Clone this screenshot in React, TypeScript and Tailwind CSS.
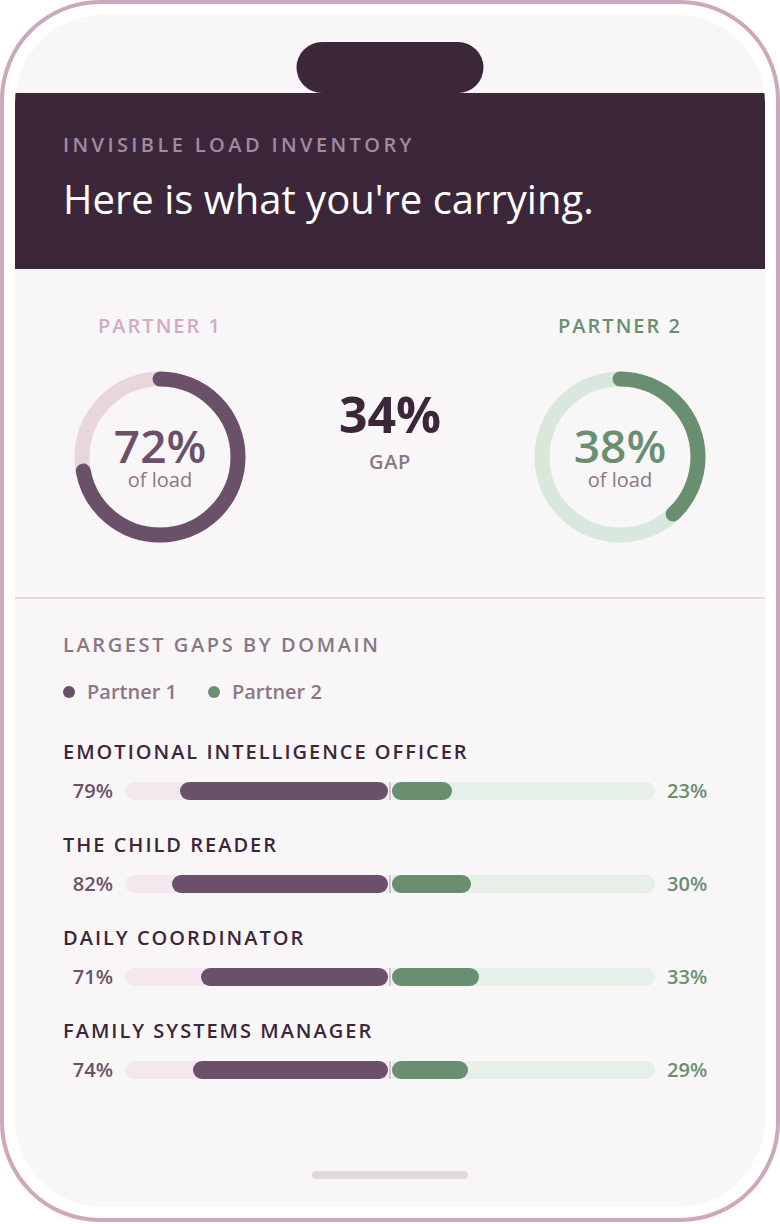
import React from "react";

type Domain = { name: string; p1: number; p2: number };

const domains: Domain[] = [
  { name: "Emotional Intelligence Officer", p1: 79, p2: 23 },
  { name: "The Child Reader", p1: 82, p2: 30 },
  { name: "Daily Coordinator", p1: 71, p2: 33 },
  { name: "Family Systems Manager", p1: 74, p2: 29 },
];

const font = { fontFamily: "'Open Sans', 'Noto Sans', sans-serif" };

const Ring = ({
  pct,
  track,
  fill,
  textClass,
}: {
  pct: number;
  track: string;
  fill: string;
  textClass: string;
}) => {
  const r = 78;
  const c = 2 * Math.PI * r;
  return (
    <div className="relative h-[172px] w-[172px]">
      <svg width="172" height="172" viewBox="0 0 172 172" className="-rotate-90">
        <circle cx="86" cy="86" r={r} fill="none" stroke={track} strokeWidth="15" />
        <circle
          cx="86"
          cy="86"
          r={r}
          fill="none"
          stroke={fill}
          strokeWidth="15"
          strokeLinecap="round"
          strokeDasharray={`${(c * pct) / 100} ${c}`}
        />
      </svg>
      <div className="absolute inset-0 flex flex-col items-center justify-center">
        <span className={`text-[46px] font-semibold leading-[44px] ${textClass}`}>{pct}%</span>
        <span className="mt-[2px] text-[20px] leading-[22px] text-[#8b7686]">of load</span>
      </div>
    </div>
  );
};

const DomainRow = ({ d }: { d: Domain }) => (
  <div className="flex flex-col gap-[15px]">
    <div className="text-[20px] font-semibold uppercase leading-6 tracking-[0.1em] text-[#3c2639]">
      {d.name}
    </div>
    <div className="flex items-center gap-3">
      <span className="w-[50px] text-right text-[20px] font-semibold leading-6 text-[#6a5068]">
        {d.p1}%
      </span>
      <div className="flex h-[18px] flex-1 items-stretch">
        <div className="flex flex-1 justify-end rounded-l-full bg-[#f2e8ed]">
          <div className="rounded-full bg-[#6a5068]" style={{ width: `${d.p1}%` }} />
        </div>
        <div className="flex w-[4px] justify-center">
          <div className="w-[2px] bg-[#dcc0cf]" />
        </div>
        <div className="flex flex-1 rounded-r-full bg-[#e6f0e8]">
          <div className="rounded-full bg-[#6a8f70]" style={{ width: `${d.p2}%` }} />
        </div>
      </div>
      <span className="w-[50px] text-[20px] font-semibold leading-6 text-[#6a8f70]">{d.p2}%</span>
    </div>
  </div>
);

export default function App() {
  return (
    <div className="bg-white" style={font}>
      <div className="h-[1222px] w-[780px] rounded-[100px] border-4 border-[#cca8bd] bg-white p-[11px] shadow-[0_2px_4px_rgba(0,0,0,0.04)]">
        <div className="relative flex h-full flex-col overflow-hidden rounded-[88px] bg-[#f8f6f7]">
          {/* dynamic island */}
          <div className="absolute left-1/2 top-[27px] h-[51px] w-[187px] -translate-x-1/2 rounded-full bg-[#3c2639]" />
          <div className="h-[78px] shrink-0" />

          <header className="flex h-[176px] shrink-0 flex-col bg-[#3c2639] px-12 pt-[40px]">
            <p className="text-[20px] font-semibold uppercase leading-6 tracking-[0.17em] text-[#a38aa0]">
              Invisible load inventory
            </p>
            <h1 className="mt-[18px] text-[40px] leading-[48px] text-white">
              Here is what you're carrying.
            </h1>
          </header>

          <section className="flex h-[330px] shrink-0 items-start justify-between border-b-2 border-[#e8d8dc] px-[59px] pt-[45px]">
            <div className="flex flex-col items-center gap-[33px]">
              <span className="text-[20px] font-semibold uppercase leading-6 tracking-[0.1em] text-[#d2abc3]">
                Partner 1
              </span>
              <Ring pct={72} track="#e7d7da" fill="#6a5068" textClass="text-[#6a5068]" />
            </div>
            <div className="flex flex-col items-center pt-[75px]">
              <span className="text-[50px] font-bold leading-[50px] text-[#3c2639]">34%</span>
              <span className="mt-[11px] text-[20px] font-semibold uppercase leading-6 tracking-[0.03em] text-[#8b7686]">
                Gap
              </span>
            </div>
            <div className="flex flex-col items-center gap-[33px]">
              <span className="text-[20px] font-semibold uppercase leading-6 tracking-[0.1em] text-[#6a8f70]">
                Partner 2
              </span>
              <Ring pct={38} track="#d8e8dc" fill="#6a8f70" textClass="text-[#6a8f70]" />
            </div>
          </section>

          <section className="flex flex-col px-12 pt-[34px]">
            <p className="text-[20px] font-semibold uppercase leading-6 tracking-[0.13em] text-[#8b7686]">
              Largest gaps by domain
            </p>
            <div className="mt-[23px] flex items-center gap-[31px] text-[20px] font-semibold leading-6 text-[#8b7686]">
              <span className="flex items-center gap-3">
                <span className="h-3 w-3 rounded-full bg-[#6a5068]" />
                Partner 1
              </span>
              <span className="flex items-center gap-3">
                <span className="h-3 w-3 rounded-full bg-[#6a8f70]" />
                Partner 2
              </span>
            </div>
            <div className="mt-9 flex flex-col gap-[30px]">
              {domains.map((d) => (
                <DomainRow key={d.name} d={d} />
              ))}
            </div>
          </section>

          <div className="absolute bottom-[28px] left-1/2 h-2 w-[156px] -translate-x-1/2 rounded-full bg-[#e1d9de]" />
        </div>
      </div>
    </div>
  );
}
